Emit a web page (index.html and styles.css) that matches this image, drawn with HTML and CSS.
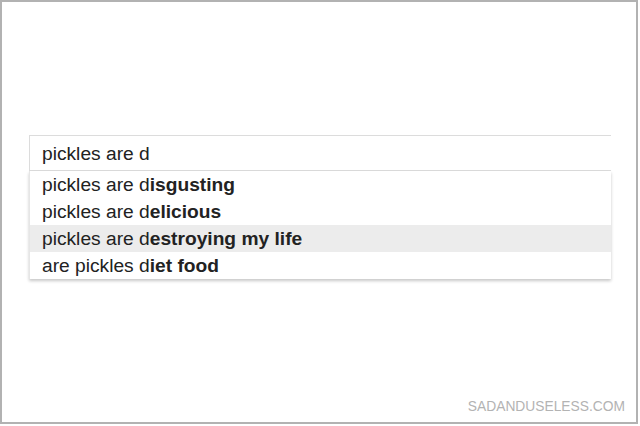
FILE: index.html
```html
<!DOCTYPE html>
<html>
<head>
<meta charset="utf-8">
<link rel="stylesheet" href="styles.css">
</head>
<body>
<div class="frame">
  <div class="search">
    <div class="input">pickles are d</div>
    <ul class="suggestions">
      <li>pickles are d<b>isgusting</b></li>
      <li>pickles are d<b>elicious</b></li>
      <li class="active">pickles are d<b>estroying my life</b></li>
      <li>are pickles d<b>iet food</b></li>
    </ul>
  </div>
  <div class="credit">SADANDUSELESS.COM</div>
</div>
</body>
</html>
```
FILE: styles.css
```css
html, body {
  margin: 0;
  padding: 0;
  background: #fff;
}
.frame {
  box-sizing: border-box;
  width: 638px;
  height: 424px;
  border: 2px solid #b2b2b2;
  display: flex;
  flex-direction: column;
  padding: 133px 0 0 27px;
  font-family: "Liberation Sans", Arial, sans-serif;
}
.search {
  width: 582px;
}
.input {
  box-sizing: border-box;
  height: 36px;
  border-top: 1px solid #dcdcdc;
  border-left: 1px solid #dcdcdc;
  border-bottom: 1px solid #dcdcdc;
  padding: 1px 0 0 12px;
  font-size: 19.2px;
  line-height: 33px;
  color: #222;
}
.suggestions {
  list-style: none;
  margin: 0;
  padding: 0;
  border-left: 1px solid #e6e6e6;
  box-shadow: 0 2px 3px rgba(0, 0, 0, 0.22);
}
.suggestions li {
  height: 27px;
  line-height: 27px;
  padding-left: 12px;
  font-size: 19.2px;
  color: #222;
  white-space: nowrap;
}
.suggestions li b {
  font-weight: bold;
}
.suggestions li.active {
  background: #ececec;
}
.credit {
  margin-top: auto;
  align-self: flex-end;
  margin-right: 11px;
  margin-bottom: 7px;
  font-size: 13.8px;
  line-height: 16px;
  color: #b3b3b3;
}
```
